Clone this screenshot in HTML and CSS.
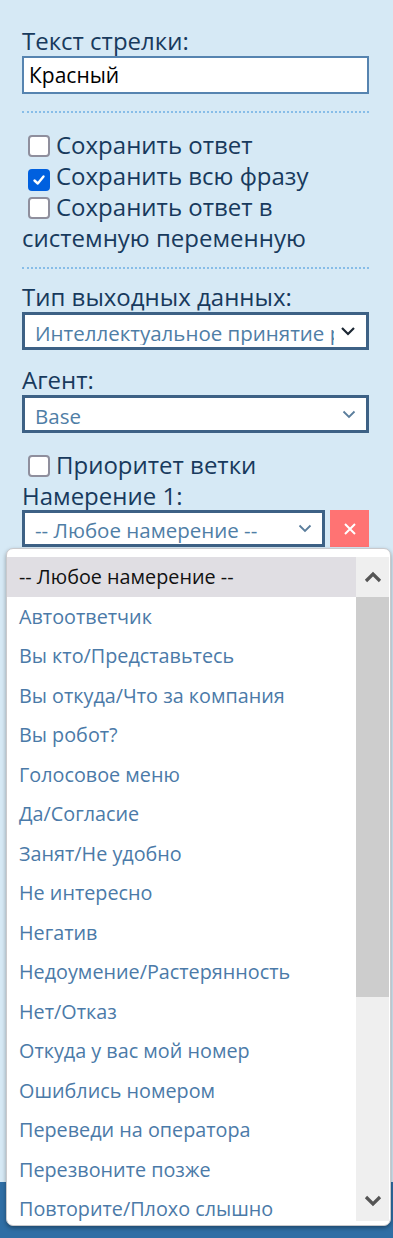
FILE: index.html
```html
<!DOCTYPE html>
<html lang="ru">
<head>
    <meta charset="UTF-8">
    <title>Настройки стрелки</title>
    <link rel="stylesheet" href="styles.css">
</head>
<body>
    <div class="page">
        <main class="panel">
            <div class="field">
                <div class="field-label">Текст стрелки:</div>
                <div class="text-input">Красный</div>
            </div>

            <div class="divider"></div>

            <div class="checks">
                <div class="check"><span class="box"></span>Сохранить ответ</div>
                <div class="check"><span class="box checked"><svg width="16" height="16" viewBox="0 0 16 16"><polyline points="3.5,8.5 6.8,11.5 12.5,4.5" fill="none" stroke="#fff" stroke-width="2.4" stroke-linecap="round" stroke-linejoin="round"/></svg></span>Сохранить всю фразу</div>
                <div class="check"><span class="box"></span>Сохранить ответ в системную переменную</div>
            </div>

            <div class="divider"></div>

            <div class="field">
                <div class="field-label">Тип выходных данных:</div>
                <div class="select">
                    <span class="select-value">Интеллектуальное принятие решения</span>
                    <svg class="chevron dark" width="16" height="10" viewBox="0 0 16 10"><polyline points="2,2 8,8 14,2" fill="none" stroke="#1c2733" stroke-width="2.2"/></svg>
                </div>
            </div>

            <div class="field">
                <div class="field-label">Агент:</div>
                <div class="select">
                    <span class="select-value">Base</span>
                    <svg class="chevron" width="14" height="9" viewBox="0 0 14 9"><polyline points="1.5,1.5 7,7 12.5,1.5" fill="none" stroke="#5a7d9c" stroke-width="1.8"/></svg>
                </div>
            </div>

            <div class="check single"><span class="box"></span>Приоритет ветки</div>

            <div class="field">
                <div class="field-label">Намерение 1:</div>
                <div class="intent-row">
                    <div class="select intent">
                        <span class="select-value">-- Любое намерение --</span>
                        <svg class="chevron" width="14" height="9" viewBox="0 0 14 9"><polyline points="1.5,1.5 7,7 12.5,1.5" fill="none" stroke="#5a7d9c" stroke-width="1.8"/></svg>
                    </div>
                    <button class="remove">
                        <svg width="14" height="14" viewBox="0 0 14 14"><path d="M2 2 L12 12 M12 2 L2 12" stroke="#fff" stroke-width="2"/></svg>
                    </button>
                </div>
            </div>
        </main>
        <footer class="footer"></footer>
    </div>

    <!-- open list of the "Намерение 1" select -->
    <div class="dropdown">
        <div class="options">
            <div class="option active">-- Любое намерение --</div>
            <div class="option">Автоответчик</div>
            <div class="option">Вы кто/Представьтесь</div>
            <div class="option">Вы откуда/Что за компания</div>
            <div class="option">Вы робот?</div>
            <div class="option">Голосовое меню</div>
            <div class="option">Да/Согласие</div>
            <div class="option">Занят/Не удобно</div>
            <div class="option">Не интересно</div>
            <div class="option">Негатив</div>
            <div class="option">Недоумение/Растерянность</div>
            <div class="option">Нет/Отказ</div>
            <div class="option">Откуда у вас мой номер</div>
            <div class="option">Ошиблись номером</div>
            <div class="option">Переведи на оператора</div>
            <div class="option">Перезвоните позже</div>
            <div class="option">Повторите/Плохо слышно</div>
        </div>
        <div class="scrollbar">
            <div class="scroll-btn">
                <svg width="18" height="12" viewBox="0 0 18 12"><polyline points="2,10 9,3 16,10" fill="none" stroke="#555" stroke-width="3.2"/></svg>
            </div>
            <div class="scroll-thumb"></div>
            <div class="scroll-track"></div>
            <div class="scroll-btn">
                <svg width="18" height="12" viewBox="0 0 18 12"><polyline points="2,2 9,9 16,2" fill="none" stroke="#555" stroke-width="3.2"/></svg>
            </div>
        </div>
    </div>
</body>
</html>
```

FILE: styles.css
```css
* {
    margin: 0;
    padding: 0;
    box-sizing: border-box;
}

body {
    font-family: "Open Sans", "Noto Sans", sans-serif;
    background: #d6e9f5;
    width: 393px;
    height: 1238px;
    overflow: hidden;
    position: relative;
}

.page {
    height: 100%;
    display: flex;
    flex-direction: column;
}

.panel {
    flex: 1;
    padding: 25px 24px 0 22px;
    color: #183a5d;
    font-size: 24px;
    line-height: 31px;
}

.footer {
    height: 56px;
    background: #2f6ea5;
}

.field-label {
    height: 31px;
}

.text-input {
    height: 38px;
    background: #fff;
    border: 2px solid #5684b0;
    padding: 0 5px;
    color: #000;
    font-size: 21px;
    line-height: 34px;
}

.divider {
    border-top: 2px dotted #87bde8;
    margin: 17px 0 16px;
}

.check {
    min-height: 31px;
}

.single {
    margin-top: 16px;
}

.box {
    display: inline-flex;
    align-items: center;
    justify-content: center;
    width: 22px;
    height: 22px;
    margin: 0 6px 0 6px;
    vertical-align: -3px;
    background: #fff;
    border: 2px solid #8f8f9d;
    border-radius: 4px;
}

.box.checked {
    background: #0060df;
    border-color: #0060df;
}

.checks + .divider {
    margin-top: 14px;
    margin-bottom: 12px;
}

.field + .field {
    margin-top: 14px;
}

.select {
    height: 38px;
    display: flex;
    align-items: center;
    background: #fff;
    border: 3px solid #3d6185;
    padding-left: 10px;
    color: #4f7ea6;
    font-size: 20.5px;
    line-height: 1;
}

.select-value {
    flex: 1;
    overflow: hidden;
    white-space: nowrap;
    padding: 6px 0 2px;
}

.chevron {
    flex: none;
    margin: 0 10px 0 12px;
}

.chevron.dark {
    margin: 0 10px 0 6px;
}

.intent-row {
    display: flex;
    gap: 5px;
    margin-top: -1px;
}

.intent {
    flex: 1;
    height: 37px;
}

.remove {
    width: 39px;
    height: 37px;
    border: none;
    background: #ff7373;
    display: flex;
    align-items: center;
    justify-content: center;
}

.dropdown {
    position: absolute;
    left: 6px;
    top: 548px;
    width: 385px;
    height: 678px;
    background: #fff;
    border: 1px solid #c9c9cc;
    border-radius: 7px;
    box-shadow: 0 2px 4px rgba(0, 0, 0, 0.35);
    padding: 8px 1px 4px 0;
    display: flex;
    overflow: hidden;
}

.options {
    flex: 1;
    overflow: hidden;
}

.option {
    height: 39.5px;
    line-height: 39.5px;
    padding-left: 12px;
    color: #4b7aa8;
    font-size: 19.8px;
    white-space: nowrap;
}

.option.active {
    background: #e0dee3;
    color: #111;
}

.scrollbar {
    width: 33px;
    display: flex;
    flex-direction: column;
    background: #efefef;
}

.scroll-btn {
    height: 39.5px;
    display: flex;
    align-items: center;
    justify-content: center;
}

.scroll-thumb {
    height: 400px;
    background: #cdcdcd;
}

.scroll-track {
    flex: 1;
}
```
